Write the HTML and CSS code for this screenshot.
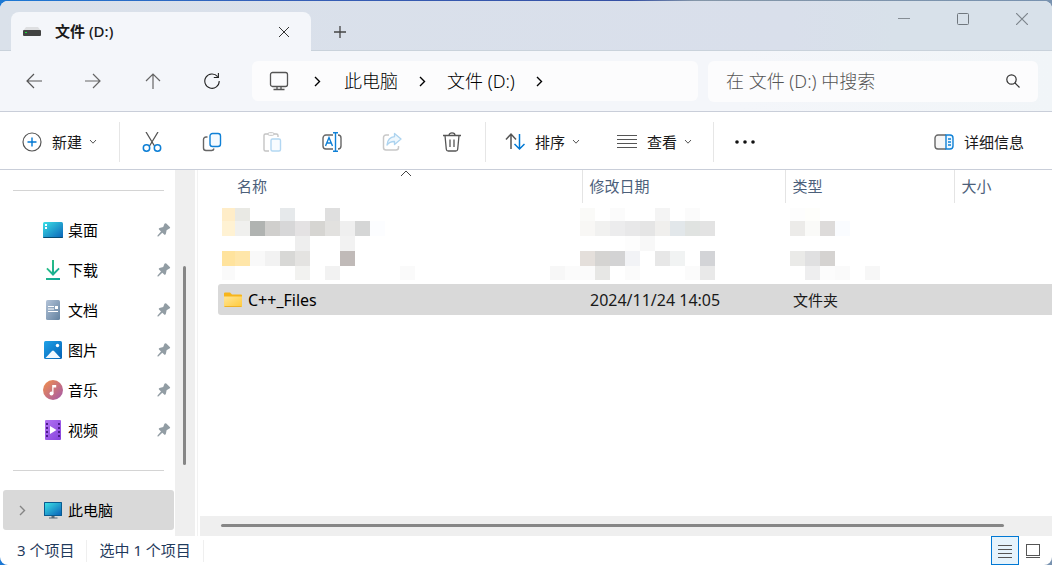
FILE: index.html
```html
<!DOCTYPE html>
<html lang="zh-CN">
<head>
<meta charset="utf-8">
<title>文件 (D:)</title>
<link rel="stylesheet" href="styles.css">
</head>
<body>
<svg class="defs" width="0" height="0" aria-hidden="true">
  <defs>
    <linearGradient id="teal-blue" x1="0" y1="0" x2="1" y2="1"><stop offset="0" stop-color="#3be0e6"/><stop offset="1" stop-color="#0a62b8"/></linearGradient>
    <linearGradient id="green" x1="0" y1="0" x2="1" y2="1"><stop offset="0" stop-color="#33c481"/><stop offset="1" stop-color="#0aa39a"/></linearGradient>
    <linearGradient id="slate" x1="0" y1="0" x2="1" y2="1"><stop offset="0" stop-color="#b3c3d8"/><stop offset="1" stop-color="#62819f"/></linearGradient>
    <linearGradient id="blue" x1="0" y1="0" x2="1" y2="1"><stop offset="0" stop-color="#1fa2e8"/><stop offset="1" stop-color="#0460b4"/></linearGradient>
    <linearGradient id="coral" x1="0" y1="0" x2="1" y2="1"><stop offset="0" stop-color="#f39049"/><stop offset="1" stop-color="#a257ac"/></linearGradient>
    <linearGradient id="purple" x1="0" y1="0" x2="1" y2="1"><stop offset="0" stop-color="#b173f2"/><stop offset="1" stop-color="#8743dc"/></linearGradient>
    <linearGradient id="yellow" x1="0" y1="0" x2="1" y2="1"><stop offset="0" stop-color="#ffe596"/><stop offset="1" stop-color="#ffca3a"/></linearGradient>
    <symbol id="pin" viewBox="0 0 14 14"><path fill="#929da4" d="M7.500.8Q8.300-.3 9.300.6L12.800 4q.8.900-.4 1.600L9.600 7.300 8.900 10.800Q8.300 12.500 7.200 11.600L5.300 9.800 1.300 13.400H.5V12.600L4 8.600 2 6.600Q1.300 5.500 2.500 4.900L6.200 4z"/></symbol>
    <symbol id="chev-down" viewBox="0 0 8 6"><path d="M1 1l3 3.200L7 1" fill="none" stroke="#555" stroke-width="1"/></symbol>
    <symbol id="chev-right" viewBox="0 0 7 11"><path d="M1 1l4.500 4.500L1 10" fill="none" stroke="currentColor" stroke-width="1.400"/></symbol>
  </defs>
</svg>
<main class="window">
  <header class="titlebar">
    <div class="tab">
      <svg width="18" height="11" viewBox="0 0 18 11"><path d="M3 1h12l3 4H0z" fill="#dedfe1"/><rect y="4" width="18" height="6" rx="1" fill="#424342"/><rect x="2" y="6" width="2" height="1" fill="#19e23a"/></svg>
      <h1 class="tab-title"><b>文件</b> (D:)</h1>
      <button class="icon-btn tab-close" aria-label="关闭标签页"><svg width="12" height="12"><path d="M1 1l10 10M11 1L1 11" stroke="#333" fill="none"/></svg></button>
    </div>
    <button class="icon-btn new-tab" aria-label="新建标签页"><svg width="12" height="12"><path d="M6 0v12M0 6h12" stroke="#444" stroke-width="1.300"/></svg></button>
    <div class="caption">
      <button class="icon-btn" aria-label="最小化"><svg width="12" height="12"><path d="M0 5.500h12" stroke="#858d94"/></svg></button>
      <button class="icon-btn" aria-label="最大化"><svg width="12" height="12"><rect x=".5" y=".5" width="11" height="11" rx="1" fill="none" stroke="#70777e"/></svg></button>
      <button class="icon-btn" aria-label="关闭"><svg width="12" height="12"><path d="M0 0l12 12M12 0L0 12" stroke="#7d858c" stroke-width="1.200"/></svg></button>
    </div>
  </header>

  <nav class="navbar">
    <div class="nav-buttons">
      <button class="icon-btn" aria-label="后退"><svg width="16" height="16"><path d="M8 1L1 8l7 7M1 8h15" stroke="#555" fill="none" stroke-width="1.200"/></svg></button>
      <button class="icon-btn" aria-label="前进"><svg width="16" height="16"><path d="M8 1l7 7-7 7M15 8H0" stroke="#666" fill="none" stroke-width="1.200"/></svg></button>
      <button class="icon-btn" aria-label="向上"><svg width="16" height="16"><path d="M1 8l7-7 7 7M8 1v15" stroke="#666" fill="none" stroke-width="1.200"/></svg></button>
      <button class="icon-btn" aria-label="刷新"><svg width="16" height="16"><path d="M15.200 8A7.200 7.200 0 1 1 13.600 3.600M14.400 0v4.500H9.800" stroke="#222" fill="none" stroke-width="1.100"/></svg></button>
    </div>
    <div class="address">
      <svg class="pc" width="20" height="20" fill="none" stroke="#555" stroke-width="1.300"><rect x="1.500" y="1.500" width="17" height="14" rx="2"/><path d="M8 15.500v3M12 15.500v3M4.500 18.500h11"/></svg>
      <svg class="first" width="7" height="11"><use href="#chev-right"/></svg>
      <a href="#">此电脑</a>
      <svg width="7" height="11"><use href="#chev-right"/></svg>
      <a href="#">文件 (D:)</a>
      <svg width="7" height="11"><use href="#chev-right"/></svg>
    </div>
    <label class="search">
      <input type="search" placeholder="在 文件 (D:) 中搜索" aria-label="搜索">
      <svg width="14" height="14" fill="none" stroke="#333" stroke-width="1.200"><circle cx="5.500" cy="5.500" r="4.700"/><path d="M9 9l4.500 4.500"/></svg>
    </label>
  </nav>

  <div class="toolbar">
    <div class="group">
      <button class="cmd"><svg width="20" height="20" fill="none"><circle cx="10" cy="10" r="9" stroke="#555" stroke-width="1.200"/><path d="M10 5.500v9M5.500 10h9" stroke="#0078d4" stroke-width="1.400"/></svg><span>新建</span><svg width="8" height="6"><use href="#chev-down"/></svg></button>
    </div>
    <div class="group icons">
      <button class="icon-btn" aria-label="剪切"><svg width="20" height="20" fill="none"><path d="M4 0l8.500 14M16 0L7.500 14" stroke="#555" stroke-width="1.300"/><g stroke="#0f80d6" stroke-width="1.500"><circle cx="4.500" cy="16" r="3.200"/><circle cx="15.500" cy="16" r="3.200"/></g></svg></button>
      <button class="icon-btn" aria-label="复制"><svg width="20" height="20" fill="none"><path d="M5.500 5H4a2.500 2.500 0 0 0-2.500 2.500V16A2.500 2.500 0 0 0 4 18.500h5.500A2.500 2.500 0 0 0 12 16.500" stroke="#666" stroke-width="1.400"/><rect x="8" y="1.500" width="10.500" height="13" rx="2.500" fill="#f4faff" stroke="#0f80d6" stroke-width="1.400"/></svg></button>
      <button class="icon-btn" aria-label="粘贴"><svg width="20" height="20" fill="none"><path d="M6 2H3.500A1.500 1.500 0 0 0 2 3.500v14A1.500 1.500 0 0 0 3.500 19H7M12 2h2.500A1.500 1.500 0 0 1 16 3.500V5" stroke="#c4c4c4" stroke-width="1.400"/><rect x="6" y=".7" width="6" height="2.600" rx="1.300" stroke="#c4c4c4"/><rect x="9" y="7" width="9.500" height="12" rx="1.500" fill="#f8fcff" stroke="#b3d7f2" stroke-width="1.400"/></svg></button>
      <button class="icon-btn" aria-label="重命名"><svg width="20" height="20" fill="none"><path d="M11 3H4a3 3 0 0 0-3 3v8a3 3 0 0 0 3 3h7M16 3a3 3 0 0 1 3 3v8a3 3 0 0 1-3 3" stroke="#666" stroke-width="1.400"/><path d="M3.500 14L7 5.500 10.500 14M4.800 11h4.600M13.500 1v18M11 .7h5M11 19.300h5" stroke="#0f80d6" stroke-width="1.400"/></svg></button>
      <button class="icon-btn" aria-label="共享"><svg width="20" height="20" fill="none"><path d="M7 3H4a2.500 2.500 0 0 0-2.500 2.500v10A2.500 2.500 0 0 0 4 18h10a2.500 2.500 0 0 0 2.500-2.500V14" stroke="#c8c8c8" stroke-width="1.500"/><path d="M12.500 1.500L19 7l-6.500 5.500V9.500C9 9.300 7 10.500 5 13c.5-4.500 3-8 7.500-8.300z" fill="#eef7fd" stroke="#acd3ef" stroke-width="1.300" stroke-linejoin="round"/></svg></button>
      <button class="icon-btn" aria-label="删除"><svg width="20" height="20" fill="none" stroke="#555" stroke-width="1.300"><path d="M1 3.500h18M7 3.500C7 0 13 0 13 3.500M3 3.500l1.300 13.700A2 2 0 0 0 6.300 19h7.400a2 2 0 0 0 2-1.800L17 3.500M8 7.500V15M12 7.500V15"/></svg></button>
    </div>
    <div class="group menus">
      <button class="cmd"><svg width="20" height="20" fill="none" stroke-width="1.500"><path d="M6 17V2M1 7.500l5-5.500 5 5.500" stroke="#555"/><path d="M14.500 2v15M9.500 12l5 5 5-5" stroke="#0078d4"/></svg><span>排序</span><svg width="8" height="6"><use href="#chev-down"/></svg></button>
      <button class="cmd"><svg width="20" height="20"><path d="M0 3.500h20M0 7.500h20M0 11.500h20M0 15.500h20" stroke="#555" stroke-width="1"/></svg><span>查看</span><svg width="8" height="6"><use href="#chev-down"/></svg></button>
    </div>
    <button class="icon-btn more" aria-label="更多"><svg width="20" height="6" fill="#111"><circle cx="2" cy="3" r="1.800"/><circle cx="10" cy="3" r="1.800"/><circle cx="18" cy="3" r="1.800"/></svg></button>
    <button class="cmd details"><svg width="20" height="16" fill="none" stroke-width="1.400"><path d="M12 1H4a3 3 0 0 0-3 3v8a3 3 0 0 0 3 3h8" fill="#f6f6f6" stroke="#666"/><path d="M12 1h4a3 3 0 0 1 3 3v8a3 3 0 0 1-3 3h-4z" fill="#eef8ff" stroke="#0f80d6"/><path d="M14 5h3M14 8h3M14 11h3" stroke="#0f80d6"/></svg><span>详细信息</span></button>
  </div>

  <div class="content">
    <aside class="sidebar">
      <div class="tree">
        <hr>
        <a class="item" href="#"><svg width="20" height="20"><rect y="2" width="20" height="16" rx="1.500" fill="url(#teal-blue)"/><path d="M0 17h20v0a1 1 0 0 1-1 1H1a1 1 0 0 1-1-1z" fill="#064a72"/><path d="M2 4h2v2H2zM2 7h2v2H2z" fill="#fff"/></svg><span>桌面</span><svg class="pin" width="14" height="14"><use href="#pin"/></svg></a>
        <a class="item" href="#"><svg width="20" height="20"><path d="M9 0h2v12l4.500-4.300 1.200 1.400L10 16 3.300 9.100l1.200-1.400L9 12zM3 18h14v2H3z" fill="url(#green)"/></svg><span>下载</span><svg class="pin" width="14" height="14"><use href="#pin"/></svg></a>
        <a class="item" href="#"><svg width="20" height="20"><rect x="3" width="14" height="20" rx="1.500" fill="url(#slate)"/><path d="M5 6.500h6M5 9h6M5 11.500h10" stroke="#fff" stroke-width="1.200"/><rect x="12" y="6" width="3" height="3" fill="#fff"/></svg><span>文档</span><svg class="pin" width="14" height="14"><use href="#pin"/></svg></a>
        <a class="item" href="#"><svg width="20" height="20"><rect x="1" y="1" width="18" height="18" rx="1.500" fill="url(#blue)"/><path d="M2.500 18L9 11q1-1 2 0l6.500 7z" fill="#f1f8ff"/><circle cx="14.500" cy="5.500" r="1.700" fill="#fff"/></svg><span>图片</span><svg class="pin" width="14" height="14"><use href="#pin"/></svg></a>
        <a class="item" href="#"><svg width="20" height="20"><circle cx="10" cy="10" r="10" fill="url(#coral)"/><circle cx="8.500" cy="13.500" r="2" fill="#fff"/><path d="M9.200 5h4v2.500h-2.700v6H9.200z" fill="#fff"/></svg><span>音乐</span><svg class="pin" width="14" height="14"><use href="#pin"/></svg></a>
        <a class="item" href="#"><svg width="20" height="20"><rect x="2" width="16" height="20" rx="1" fill="url(#purple)"/><path d="M4 3v15M16 3v15" stroke="#4d1c8c" stroke-width="2" stroke-dasharray="2 2"/><path d="M7 6l6.500 4L7 14z" fill="#fff"/></svg><span>视频</span><svg class="pin" width="14" height="14"><use href="#pin"/></svg></a>
        <hr>
        <a class="item selected" href="#"><svg class="expand" width="7" height="11"><use href="#chev-right"/></svg><svg width="20" height="20"><rect x="1" y="2" width="18" height="14" rx=".5" fill="#075b91"/><rect x="2" y="3" width="16" height="12" fill="url(#teal-blue)"/><path d="M8.500 16h3v1.500h3V18.500h-8.500V17.500h2.500z" fill="#5b6b78"/></svg><span>此电脑</span></a>
      </div>
      <div class="vscroll"><div class="vthumb"></div></div>
    </aside>

    <section class="pane">
      <div class="list">
        <table>
          <colgroup><col class="c-name"><col class="c-date"><col class="c-type"><col></colgroup>
          <thead>
            <tr>
              <th class="name">名称<svg class="sort" width="12" height="7"><path d="M1 6l5-5 5 5" fill="none" stroke="#444"/></svg></th>
              <th>修改日期</th><th>类型</th><th>大小</th>
            </tr>
          </thead>
          <tbody>
            <tr class="masked">
              <td colspan="4">
                <svg width="665" height="72" shape-rendering="crispEdges">
                  <path fill="#ffedc8" d="M0 0h13v13H0z"/><path fill="#e9e9e4" d="M13 0h15v13H13z"/><path fill="#e6e9eb" d="M58 0h15v13H58z"/><path fill="#dfdfdf" d="M103 0h15v13h-15z"/>
                  <path fill="#fff2d3" d="M0 13h13v15H0z"/><path fill="#f0f0ee" d="M13 13h15v15H13z"/><path fill="#b0b3b1" d="M28 13h15v15H28z"/><path fill="#d0cfcd" d="M43 13h15v15H43z"/><path fill="#d7d7d8" d="M58 13h15v15H58z"/><path fill="#e4e2e3" d="M73 13h15v15H73z"/><path fill="#d6d5d2" d="M88 13h15v15H88z"/><path fill="#e2e1df" d="M103 13h15v15h-15z"/><path fill="#efefef" d="M118 13h15v15h-15z"/><path fill="#d5d6d6" d="M133 13h15v15h-15z"/><path fill="#fcfdff" d="M148 13h15v15h-15z"/>
                  <path fill="#eeeeee" d="M73 28h15v15H73z"/><path fill="#f2f2f2" d="M118 28h15v15h-15z"/>
                  <path fill="#ffe39d" d="M0 43h13v15H0z"/><path fill="#ffe6a9" d="M13 43h15v15H13z"/><path fill="#f9f9f9" d="M28 43h15v15H28z"/><path fill="#f2f2f2" d="M43 43h15v15H43z"/><path fill="#d8d8d6" d="M58 43h15v15H58z"/><path fill="#e4e3e1" d="M73 43h15v15H73z"/><path fill="#c0bab8" d="M118 43h15v15h-15z"/>
                  <path fill="#fafafa" d="M0 58h13v14H0z"/><path fill="#f2f2f0" d="M73 58h15v14H73z"/><path fill="#f2f2f2" d="M103 58h15v14h-15z"/><path fill="#fafafa" d="M178 58h15v14h-15z"/>
                  <path fill="#fafaf8" d="M358 0h15v13h-15z"/><path fill="#fbfbfb" d="M388 0h15v13h-15zM463 0h15v13h-15z"/><path fill="#f4f4f4" d="M433 0h15v13h-15z"/>
                  <path fill="#f8f7f5" d="M358 13h15v15h-15z"/><path fill="#f1f1f0" d="M373 13h15v15h-15z"/><path fill="#ececed" d="M388 13h15v15h-15z"/><path fill="#e8e8e9" d="M403 13h15v15h-15z"/><path fill="#e5e5e5" d="M418 13h15v15h-15z"/><path fill="#f0efed" d="M433 13h15v15h-15z"/><path fill="#e2e7ea" d="M448 13h15v15h-15z"/><path fill="#e0e3e1" d="M463 13h15v15h-15z"/><path fill="#e3e3e3" d="M478 13h15v15h-15z"/>
                  <path fill="#fdfdfd" d="M403 28h15v15h-15z"/><path fill="#f8f8f8" d="M418 28h15v15h-15z"/>
                  <path fill="#e4dfdb" d="M358 43h15v15h-15z"/><path fill="#d5d4d2" d="M373 43h15v15h-15z"/><path fill="#d3d3d4" d="M388 43h15v15h-15z"/><path fill="#f2f3f6" d="M403 43h15v15h-15z"/><path fill="#e7e7e7" d="M433 43h15v15h-15z"/><path fill="#f1f3f3" d="M448 43h15v15h-15z"/><path fill="#d3d4d7" d="M478 43h15v15h-15z"/>
                  <path fill="#f7f7f7" d="M328 58h15v14h-15z"/><path fill="#fbfbfb" d="M343 58h30v14h-30zM403 58h15v14h-15zM463 58h15v14h-15z"/><path fill="#e7e7e5" d="M373 58h15v14h-15z"/><path fill="#e9e9e9" d="M478 58h15v14h-15z"/>
                  <path fill="#fdfdfd" d="M568 0h15v13h-15z"/><path fill="#fefefb" d="M583 0h15v13h-15z"/><path fill="#ecebe9" d="M568 13h15v15h-15z"/><path fill="#fafaf8" d="M583 13h15v15h-15z"/><path fill="#dddbda" d="M598 13h15v15h-15z"/><path fill="#fafcff" d="M613 13h15v15h-15z"/>
                  <path fill="#eaeae8" d="M568 43h15v15h-15z"/><path fill="#e0e0e1" d="M583 43h15v15h-15z"/><path fill="#d5d3d1" d="M598 43h15v15h-15z"/><path fill="#eeeeef" d="M583 58h15v14h-15z"/><path fill="#fcfcfc" d="M598 58h15v14h-15z"/><path fill="#fafafa" d="M613 58h15v14h-15z"/><path fill="#f7f7f7" d="M643 58h15v14h-15z"/>
                </svg>
              </td>
            </tr>
            <tr class="row">
              <td class="latin"><div class="file"><svg width="20" height="20"><path d="M1 3.500a1 1 0 0 1 1-1h5l2 2h9a1 1 0 0 1 1 1V8H1z" fill="#f7b51b"/><path d="M1 6.500h18V16a1 1 0 0 1-1 1H2a1 1 0 0 1-1-1z" fill="url(#yellow)"/><path d="M1.500 16.500h17" stroke="#eeb128"/></svg><span>C++_Files</span></div></td>
              <td class="latin">2024/11/24 14:05</td><td>文件夹</td><td></td>
            </tr>
          </tbody>
        </table>
      </div>
      <div class="hscroll"><div class="hthumb"></div></div>
    </section>
  </div>

  <footer class="status">
    <span>3 个项目</span><span>选中 1 个项目</span>
    <div class="views">
      <button class="view active" aria-label="详细信息视图"><svg width="14" height="14"><path d="M0 1.500h14M0 5.500h14M0 9.500h14M0 13.500h14" stroke="#555"/></svg></button>
      <button class="view" aria-label="大图标视图"><svg width="14" height="14"><rect x=".5" y=".5" width="13" height="11" fill="none" stroke="#555"/><path d="M0 13.500h14" stroke="#555"/></svg></button>
    </div>
  </footer>
</main>
</body>
</html>
```
FILE: styles.css
```css
* { box-sizing: border-box; }

html, body { height: 100%; }

body {
  margin: 0;
  padding-top: 1px;
  background: linear-gradient(90deg, #1c78d4, #3560b8 25%, #3550a4 60%, #8496a8 66%, #7892b0);
  font: 15px/20px "Noto Sans", "Noto Sans CJK SC", sans-serif;
  color: #1a1a1a;
}

.defs { position: absolute; }
svg { display: block; flex: none; }
a { color: inherit; text-decoration: none; }

button {
  border: 0;
  padding: 0;
  background: none;
  font: inherit;
  color: inherit;
}

.icon-btn {
  display: flex;
  align-items: center;
  justify-content: center;
  width: 60px;
  height: 40px;
}

.window {
  display: flex;
  flex-direction: column;
  height: 100%;
  border-radius: 8px;
  overflow: hidden;
  background: #fff;
}

/* Title bar */
.titlebar {
  display: flex;
  align-items: flex-end;
  height: 50px;
  padding: 0 1px 0 11px;
  background: linear-gradient(90deg, #dae1ea, #d9dfeb 75%, #d8e1ea 85%);
  box-shadow: inset 0 -1px #c9d2db;
}

.tab {
  display: flex;
  align-items: center;
  width: 300px;
  height: 39px;
  padding-left: 12px;
  border-radius: 8px 8px 0 0;
  background: #f4f6fa;
}

.tab-title {
  flex: 1;
  margin: 0 0 2px 14px;
  font-size: 15px;
  font-weight: 500;
}

.tab-close { width: 54px; height: 39px; }
.new-tab { width: 58px; height: 38px; }

.caption {
  display: flex;
  align-self: flex-start;
  margin-left: auto;
}

.caption .icon-btn { width: 59px; height: 36px; }

/* Navigation */
.navbar {
  display: grid;
  grid-template-columns: 238px 446fr 330fr;
  align-items: center;
  gap: 10px;
  height: 61px;
  padding: 0 14px 0 4px;
  border-bottom: 1px solid #c9ced9;
  background: linear-gradient(90deg, #f4f6fa 70%, #f1f5f8);
}

.nav-buttons { display: flex; }

.address {
  display: flex;
  align-items: center;
  gap: 21px;
  height: 40px;
  padding-left: 17px;
  border-radius: 6px;
  background: #fcfcfd;
  font-size: 18px;
  font-weight: 300;
  color: #000;
}

.address .first { margin: 0 2px 0 4px; }

.search {
  display: flex;
  align-items: center;
  height: 41px;
  padding: 0 18px;
  border-radius: 6px;
  background: #fcfcfd;
}

.search input {
  flex: 1;
  min-width: 0;
  padding: 0;
  border: 0;
  outline: 0;
  background: none;
  font: inherit;
  font-size: 18px;
  font-weight: 300;
}

.search input::placeholder { color: #555; opacity: 1; }

/* Command bar */
.toolbar {
  display: flex;
  align-items: center;
  height: 58px;
  padding: 2px 28px 0 22px;
  border-bottom: 1px solid #c9ced9;
}

.group {
  display: flex;
  align-items: center;
  height: 40px;
  border-right: 1px solid #e6e6e6;
}

.cmd {
  display: flex;
  align-items: center;
  gap: 10px;
}

.cmd span + svg { margin-left: -3px; }

.group:first-child { padding-right: 22px; }
.icons { padding: 0 3px 0 2px; }
.menus { gap: 37px; padding: 0 21px 0 19px; }
.more { width: 61px; }
.details { margin-left: auto; }

/* Body */
.content {
  display: flex;
  flex: 1;
  min-height: 0;
}

.sidebar { display: flex; width: 198px; border-right: 1px solid #f2f2f2; }
.tree { width: 175px; }

.tree hr {
  height: 1px;
  margin: 20px 11px 19px 13px;
  border: 0;
  background: #d4d4d4;
}

.item {
  display: flex;
  align-items: center;
  gap: 5px;
  height: 40px;
  margin: 0 1px 0 3px;
  padding: 0 3px 0 40px;
  color: #000;
}

.pin { margin-left: auto; }

.selected {
  padding-left: 16px;
  border-radius: 3px;
  background: #d9d9d9;
}

.expand { margin-right: 12px; color: #858585; }

.vscroll {
  width: 20px;
  padding: 96px 8px 71px;
  background: #efefef;
}

.vthumb {
  width: 3px;
  height: 100%;
  border-radius: 2px;
  background: #868686;
}

.pane {
  display: flex;
  flex: 1;
  flex-direction: column;
  min-width: 0;
  padding-left: 2px;
}

.list { flex: 1; min-height: 0; padding-left: 18px; }

table {
  width: 100%;
  border-collapse: collapse;
  table-layout: fixed;
}

.c-name { width: 364px; }
.c-date { width: 203px; }
.c-type { width: 169px; }

th {
  height: 33px;
  padding: 0 7px 2px;
  border-left: 1px solid #e4e4e4;
  font-weight: 400;
  text-align: left;
  color: #4c607a;
}

th.name {
  position: relative;
  padding-left: 19px;
  border-left: 0;
}

.sort { position: absolute; top: 0; left: 50%; }

td { padding: 0 8px; }

.masked td { height: 81px; padding: 0 4px; }

.row td { height: 31px; background: #d9d9d9; }
.row td:first-child { padding-left: 5px; border-radius: 3px 0 0 3px; }
.row .latin { font-size: 16px; }

.file {
  display: flex;
  align-items: center;
  gap: 5px;
  color: #000;
}

.hscroll {
  height: 20px;
  padding: 8px 48px 9px 21px;
  background: #efefef;
}

.hthumb {
  height: 3px;
  border-radius: 2px;
  background: #868686;
}

/* Status bar */
.status {
  display: flex;
  align-items: center;
  height: 29px;
  padding-left: 17px;
  color: #1f3a5c;
}

.status > span {
  padding: 0 12px 2px 0;
  border-right: 1px solid #efefef;
}

.status > span + span { padding-left: 12px; }

.views { display: flex; margin-left: auto; padding-right: 5px; }

.view {
  display: flex;
  align-items: center;
  justify-content: center;
  width: 28px;
  height: 29px;
}

.active { border: 1px solid #0078d4; background: #e5f3fc; }
```
